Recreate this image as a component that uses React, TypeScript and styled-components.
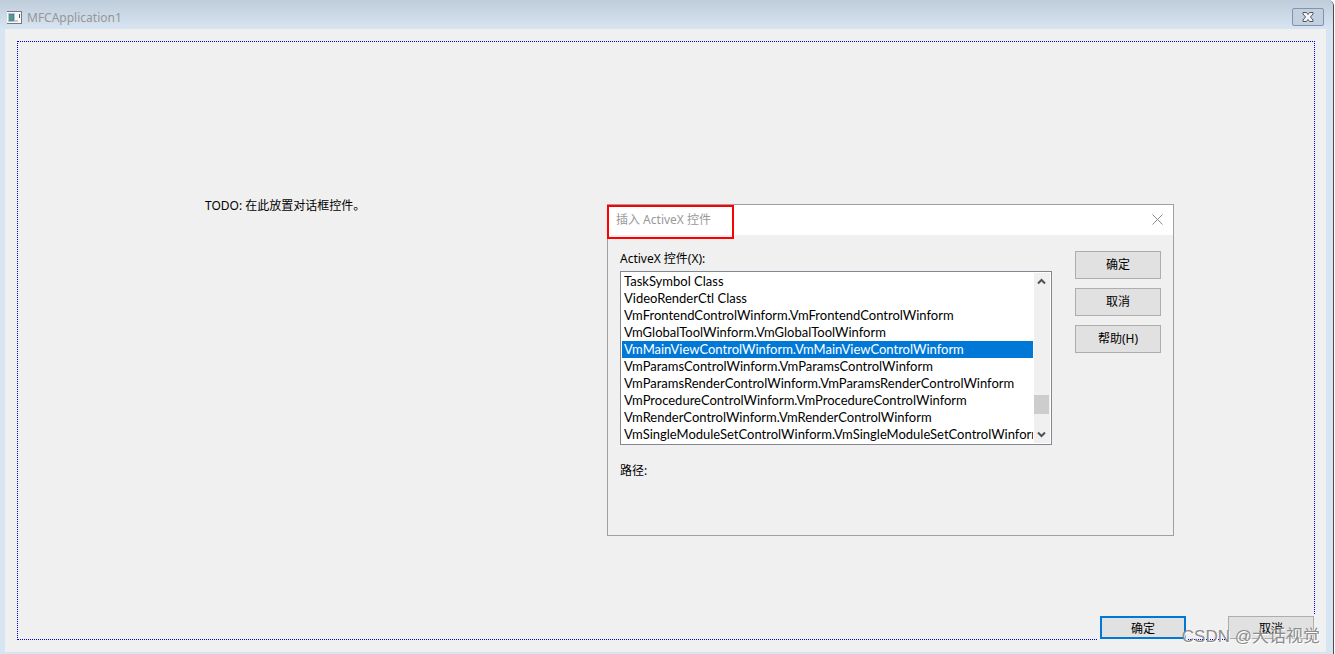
import React from "react";
import styled, { createGlobalStyle, css } from "styled-components";

const uiFont = css`
  font-family: "Noto Sans", "Noto Sans CJK SC", sans-serif;
`;

const wideFont = css`
  font-family: Lato, "Noto Sans CJK SC", sans-serif;
  font-size: 13px;
`;

const GlobalStyle = createGlobalStyle`
  *, *::before, *::after { box-sizing: border-box; }
  html { background: #ffffff; }
  body { margin: 0; ${uiFont} font-size: 12px; color: #000; }
  button, select { font: inherit; color: inherit; }
`;

const Window = styled.div`
  position: relative;
  display: flex;
  flex-direction: column;
  min-height: 100vh;
  margin-right: 1px;
  padding: 0 7px 2px 5px;
  border-right: 1px solid #4c4c4c;
  border-top-right-radius: 6px;
  background: #d7e4f2;
  overflow: hidden;
`;

const TitleBar = styled.header`
  display: flex;
  align-items: center;
  gap: 5px;
  height: 29px;
  margin: 0 -7px 0 -5px;
  padding: 5px 9px 0 7px;
  background: linear-gradient(#bfcddb, #d7e4f2);
`;

const AppTitle = styled.h1`
  flex: 1;
  margin: 0;
  padding-top: 1px;
  font-size: 12px;
  line-height: 18px;
  font-weight: 400;
  color: #969696;
`;

const CaptionButton = styled.button`
  display: grid;
  place-items: center;
  width: 32px;
  height: 18px;
  padding: 0;
  border: 1px solid #8393ad;
  border-radius: 2px;
  background: #c3d0df;
`;

const Client = styled.main`
  flex: 1;
  display: flex;
  padding: 12px 11px 12px 12px;
  background: #f0f0f0;
`;

const DesignFrame = styled.section`
  flex: 1;
  display: flex;
  flex-direction: column;
  justify-content: space-between;
  border: 1px dotted #0000c8;
`;

const Hint = styled.p`
  margin: 0;
  padding: 155px 0 0 187px;
  line-height: 18px;
`;

const Footer = styled.footer`
  display: flex;
  justify-content: flex-end;
  gap: 42px;
`;

const PushButton = styled.button<{ $primary?: boolean; $tall?: boolean }>`
  width: 86px;
  height: ${(p) => (p.$tall ? 28 : 23)}px;
  padding: ${(p) => (p.$tall ? 0 : 2)}px 0 0;
  border: ${(p) => (p.$primary ? "2px solid #0078d7" : "1px solid #adadad")};
  background: #e1e1e1;
  line-height: 18px;
  box-shadow: 0 0 0 2px #f0f0f0;
`;

const Dialog = styled.section`
  position: absolute;
  left: 607px;
  top: 204px;
  width: 567px;
  min-height: 332px;
  border: 1px solid #a0a0a0;
  background: #f0f0f0;
`;

const DialogBar = styled.header`
  display: flex;
  justify-content: space-between;
  height: 30px;
  background: #fff;
`;

const DialogTitle = styled.h2`
  width: 127px;
  height: 34px;
  margin: 0 0 0 -1px;
  padding: 4px 7px;
  border: 2px solid #ff0000;
  font-size: 12px;
  line-height: 18px;
  font-weight: 400;
  color: #999;
`;

const DialogClose = styled.button`
  display: grid;
  place-items: center;
  width: 31px;
  height: 28px;
  padding: 0;
  border: 0;
  background: none;
`;

const DialogBody = styled.div`
  display: flex;
  justify-content: space-between;
  padding: 15px 12px 0;
`;

const Field = styled.div`
  width: 432px;
  display: flex;
  flex-direction: column;
`;

const Label = styled.label`
  line-height: 18px;
  margin-bottom: 3px;
`;

const ListFrame = styled.div`
  display: flex;
  height: 174px;
  padding: 1px;
  border: 1px solid #828790;
  background: #fff;
`;

const ListBox = styled.select`
  flex: 1;
  min-width: 0;
  height: 170px;
  padding: 0;
  border: 0;
  border-radius: 0;
  outline: 0;
  background: #fff;
  overflow: hidden;
  scrollbar-width: none;
  && { ${wideFont} }
`;

const Item = styled.option`
  height: 17px;
  min-height: 17px;
  padding: 0 2px;
  line-height: 17px;
  color: #000;
  &:checked {
    color: #fff;
    background: #0078d7 linear-gradient(#0078d7, #0078d7);
  }
`;

const ScrollTrack = styled.div`
  display: flex;
  flex-direction: column;
  align-items: flex-start;
  width: 16px;
  margin-left: 1px;
  background: #f0f0f0;
`;

const ScrollArrow = styled.button`
  display: grid;
  place-items: center;
  width: 15px;
  height: 17px;
  padding: 0;
  border: 0;
  background: none;
`;

const ScrollThumb = styled.div`
  width: 15px;
  height: 19px;
  margin: auto 0 12px;
  background: #cdcdcd;
`;

const PathLabel = styled.p`
  margin: 17px 0 0;
  line-height: 18px;
`;

const Actions = styled.div`
  display: flex;
  flex-direction: column;
  gap: 9px;
  padding-top: 1px;
`;

const Watermark = styled.div`
  position: absolute;
  right: 13px;
  bottom: 5px;
  font-family: "Liberation Sans", "Noto Sans CJK SC", sans-serif;
  font-size: 17px;
  line-height: 24px;
  color: #8c8c8c;
  text-shadow: 1px 1px 0 #fff;
  pointer-events: none;
`;

const controls = [
  "TaskSymbol Class",
  "VideoRenderCtl Class",
  "VmFrontendControlWinform.VmFrontendControlWinform",
  "VmGlobalToolWinform.VmGlobalToolWinform",
  "VmMainViewControlWinform.VmMainViewControlWinform",
  "VmParamsControlWinform.VmParamsControlWinform",
  "VmParamsRenderControlWinform.VmParamsRenderControlWinform",
  "VmProcedureControlWinform.VmProcedureControlWinform",
  "VmRenderControlWinform.VmRenderControlWinform",
  "VmSingleModuleSetControlWinform.VmSingleModuleSetControlWinform",
];

const AppIcon = () => (
  <svg width="15" height="13" viewBox="0 0 15 13" aria-hidden="true">
    <path d="M0 0H15V13H0V12H14V1H0Z" fill="#777" />
    <rect x="0" y="1" width="14" height="11" fill="#f8f8f8" />
    <rect x="1" y="2" width="7" height="9" fill="#b9c4cf" />
    <rect x="2" y="3" width="5" height="7" fill="#4a7fae" />
    <rect x="2" y="4" width="4" height="5" fill="#4f9c86" />
    <rect x="8" y="9" width="3" height="2" fill="#ccc" />
    <rect x="12" y="3" width="1" height="4" fill="#33607a" />
  </svg>
);

const CaptionCross = () => (
  <svg width="12" height="10" viewBox="0 0 12 10" aria-hidden="true">
    <path d="M1 .5H4.5L6 2.5L7.500 .5H11V2L8.500 5L11 8V9.500H7.500L6 7.500L4.500 9.500H1V8L3.500 5L1 2Z" fill="#f4f4f4" stroke="#535666" />
  </svg>
);

const Chevron = ({ down }: { down?: boolean }) => (
  <svg width="9" height="7" viewBox="0 0 9 7" aria-hidden="true">
    <path d={down ? "M1 1.5L4.5 5L8 1.5" : "M1 5.5L4.5 2L8 5.5"} fill="none" stroke="#505050" strokeWidth="2" />
  </svg>
);

export default function App() {
  return (
    <>
      <GlobalStyle />
      <Window>
        <TitleBar>
          <AppIcon />
          <AppTitle>MFCApplication1</AppTitle>
          <CaptionButton aria-label="Close">
            <CaptionCross />
          </CaptionButton>
        </TitleBar>
        <Client>
          <DesignFrame>
            <Hint>TODO: 在此放置对话框控件。</Hint>
            <Footer>
              <PushButton $primary>确定</PushButton>
              <PushButton>取消</PushButton>
            </Footer>
          </DesignFrame>
        </Client>
        <Dialog>
          <DialogBar>
            <DialogTitle>插入 ActiveX 控件</DialogTitle>
            <DialogClose aria-label="Close">
              <svg width="11" height="11" viewBox="0 0 11 11" aria-hidden="true">
                <path d="M0.5 0.5L10.5 10.5M10.5 0.5L0.5 10.5" stroke="#8a8a8a" />
              </svg>
            </DialogClose>
          </DialogBar>
          <DialogBody>
            <Field>
              <Label htmlFor="controls">ActiveX 控件(X):</Label>
              <ListFrame>
                <ListBox id="controls" size={10} defaultValue={controls[4]}>
                  {controls.map((name) => (
                    <Item key={name} value={name}>
                      {name}
                    </Item>
                  ))}
                </ListBox>
                <ScrollTrack>
                  <ScrollArrow aria-label="Scroll up">
                    <Chevron />
                  </ScrollArrow>
                  <ScrollThumb />
                  <ScrollArrow aria-label="Scroll down">
                    <Chevron down />
                  </ScrollArrow>
                </ScrollTrack>
              </ListFrame>
              <PathLabel>路径:</PathLabel>
            </Field>
            <Actions>
              <PushButton $tall>确定</PushButton>
              <PushButton $tall>取消</PushButton>
              <PushButton $tall>帮助(H)</PushButton>
            </Actions>
          </DialogBody>
        </Dialog>
        <Watermark>CSDN @大话视觉</Watermark>
      </Window>
    </>
  );
}
